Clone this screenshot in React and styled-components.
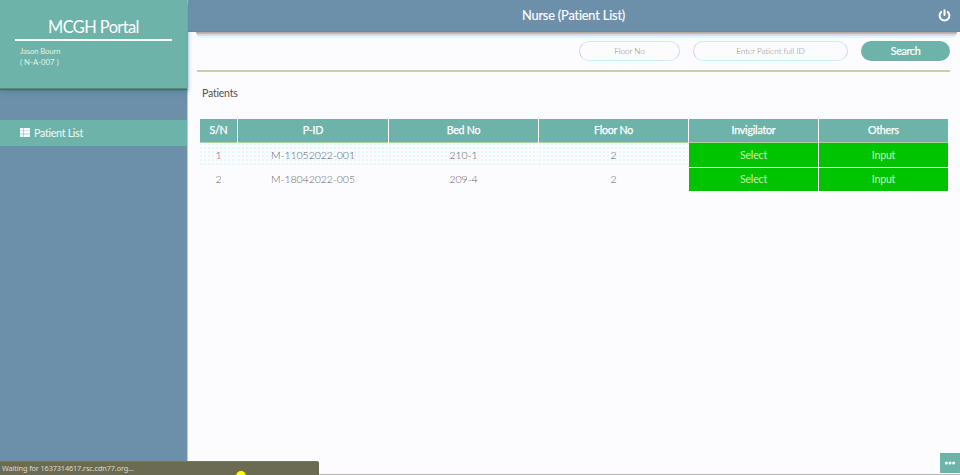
import React from 'react';
import styled, { createGlobalStyle } from 'styled-components';

const Global = createGlobalStyle`
  * { box-sizing: border-box; }
  html, body { margin: 0; overflow: hidden; }
  body {
    font-family: Lato, "Open Sans", sans-serif;
    font-variant-ligatures: none;
    background: #fcfcff;
  }
`;

const Page = styled.div`
  position: relative;
  display: flex;
  width: 960px;
  height: 475px;
  overflow: hidden;
  background: #fcfcff;
`;

const Sidebar = styled.aside`
  width: 188px;
  flex: none;
  background: #6c8faa;
  border-right: 1px solid #b9cdb9;
`;

const Brand = styled.div`
  height: 89px;
  padding: 16px 15px 0;
  background: #6db3aa;
  border-bottom: 1px solid #5d8a7c;
  box-shadow: 0 1px 1px #456b60, 0 3px 5px #4d86a0;
  color: #fff;
`;

const BrandTitle = styled.h1`
  margin: 0;
  height: 25px;
  font-size: 16.4px;
  font-weight: 400;
  line-height: 22px;
  letter-spacing: -0.58px;
  text-align: center;
  white-space: nowrap;
  border-bottom: 2px solid #fbfff4;
`;

const User = styled.div`
  padding: 5px 5px 0;
  font-size: 7.7px;
  line-height: 11px;
  color: #e2f3dd;
`;

const UserLine = styled.div`
  letter-spacing: ${(p) => p.$spacing};
`;

const NavItem = styled.a`
  display: flex;
  align-items: center;
  gap: 4px;
  height: 26px;
  margin-top: 31px;
  padding: 0 0 2px 20px;
  background: #6db3aa;
  color: #f2fbf4;
  font-size: 10.8px;
  letter-spacing: -0.34px;
`;

const Main = styled.main`
  width: 772px;
`;

const TopBar = styled.header`
  position: relative;
  display: flex;
  align-items: center;
  justify-content: center;
  height: 32px;
  background: #6c8faa;
  border-bottom: 1px solid #608ca8;
  color: #fff;
  font-size: 12.8px;
  letter-spacing: -0.18px;
  -webkit-text-stroke: 0.15px #fff;
  padding: 0 1px 1px 0;
`;

const PowerButton = styled.span`
  position: absolute;
  right: 9px;
  top: 9px;
  display: flex;
`;

const BarShadow = styled.div`
  height: 6px;
  margin: 0 3px 0 8px;
  border-radius: 0 0 8px 8px;
  background: linear-gradient(#b2aba8 0 1px, #c2b8b0 1px 2px, #dcd5f4 2px 4px, #dcfaff 4px 6px);
`;

const SearchBar = styled.form`
  display: flex;
  justify-content: flex-end;
  height: 34px;
  margin: 0 10px 0 9px;
  padding-top: 3px;
  gap: 13px;
  border-bottom: 2px solid #c5d3a3;
`;

const Field = styled.input`
  width: ${(p) => p.$width};
  height: 20px;
  padding: 0;
  border: 1px solid #ccecff;
  border-left-color: #d5d0f6;
  border-right-color: #d5d0f6;
  border-radius: 10px;
  background: #fcfcff;
  font-family: inherit;
  font-size: 8.2px;
  letter-spacing: -0.05px;
  font-weight: 300;
  text-align: center;
  outline: none;
  &::placeholder { color: #85838a; opacity: 1; }
`;

const SearchButton = styled.button`
  width: 89px;
  height: 20px;
  padding: 0 0 2px;
  border: 0;
  border-radius: 10px;
  background: #6db3aa;
  color: #fff;
  font-family: inherit;
  font-size: 10.8px;
  letter-spacing: -0.35px;
  -webkit-text-stroke: 0.2px #fff;
`;

const SectionTitle = styled.h2`
  margin: 14px 0 0 14px;
  height: 33px;
  font-size: 10.5px;
  font-weight: 400;
  line-height: 15px;
  letter-spacing: -0.2px;
  color: #505050;
`;

const Table = styled.div`
  width: 748px;
  margin-left: 12px;
`;

const Row = styled.div`
  display: grid;
  grid-template-columns: 37px 150px 149px 149px 129px 129px;
  column-gap: 1px;
  height: 24px;
  & + & { margin-bottom: 1px; }
  &:last-child { height: 23px; }
`;

const HeadCell = styled.div`
  display: flex;
  align-items: center;
  justify-content: center;
  padding-bottom: 1px;
  background: #6db3aa;
  border-bottom: 1px solid #b4cda4;
  color: #fff;
  font-size: 10.6px;
  letter-spacing: -0.2px;
  -webkit-text-stroke: 0.25px #fff;
`;

const Cell = styled.div`
  display: flex;
  align-items: center;
  justify-content: center;
  padding-bottom: 1px;
  color: ${(p) => (p.$alt ? '#5c5a68' : '#68665a')};
  font-size: 10.6px;
  font-weight: 300;
  letter-spacing: -0.08px;
  background: ${(p) =>
    p.$alt ? 'radial-gradient(circle at 1px 1px, #dff9ff 0.7px, #fcfcff 1px) 0 0 / 4px 4px' : '#fcfcff'};
`;

const ActionCell = styled.div`
  display: flex;
  align-items: center;
  justify-content: center;
  padding-bottom: 1px;
  background: #00c400;
  color: #c9f5b4;
  font-size: 10.5px;
  letter-spacing: -0.15px;
`;

const StatusBubble = styled.div`
  position: absolute;
  left: 0;
  bottom: 0;
  width: 319px;
  height: 14px;
  padding-left: 2px;
  overflow: hidden;
  border-top: 1px solid #77775f;
  border-radius: 0 2px 0 0;
  background: #6b6b53;
  color: #dddccb;
  font-family: "Noto Sans", "Open Sans", sans-serif;
  font-size: 7.3px;
  letter-spacing: -0.11px;
  line-height: 13px;
  white-space: nowrap;
`;

const Pointer = styled.div`
  position: absolute;
  left: 236px;
  top: 9px;
  width: 10px;
  height: 10px;
  border-radius: 50%;
  background: #ffff00;
`;

const BottomEdge = styled.div`
  position: absolute;
  left: 319px;
  right: 0;
  bottom: 0;
  height: 1px;
  background: #b8b8ac;
`;

const MoreButton = styled.button`
  position: absolute;
  right: 0;
  bottom: 2px;
  display: flex;
  align-items: center;
  justify-content: center;
  width: 20px;
  height: 20px;
  padding: 0;
  border: 0;
  background: #6db3aa;
`;

const ListIcon = () => (
  <svg width="10" height="9" viewBox="0 0 10 9" fill="#f5faff">
    <path d="M0 0h3v2.7H0zM3.5 0H10v2.7H3.5zM0 3.1h3v2.7H0zM3.5 3.1H10v2.7H3.5zM0 6.2h3V9H0zM3.5 6.2H10V9H3.5z" />
  </svg>
);

const PowerIcon = () => (
  <svg width="13" height="13" viewBox="0 0 13 13" fill="none" stroke="#fff" strokeWidth="2" strokeLinecap="round">
    <path d="M3.2 2.9a4.9 4.9 0 1 0 6.6 0M6.5 1.2v4.8" />
  </svg>
);

const DotsIcon = () => (
  <svg width="12" height="4" viewBox="0 0 12 4" fill="#fff">
    <circle cx="2.4" cy="2" r="1.5" />
    <circle cx="6" cy="2" r="1.5" />
    <circle cx="9.6" cy="2" r="1.5" />
  </svg>
);

const headings = ['S/N', 'P-ID', 'Bed No', 'Floor No', 'Invigilator', 'Others'];
const patients = [
  ['1', 'M-11052022-001', '210-1', '2'],
  ['2', 'M-18042022-005', '209-4', '2'],
];

export default function App() {
  return (
    <Page>
      <Global />
      <Sidebar>
        <Brand>
          <BrandTitle>MCGH Portal</BrandTitle>
          <User>
            <UserLine $spacing="-0.1px">Jason Bourn</UserLine>
            <UserLine $spacing="0.05px">( N-A-007 )</UserLine>
          </User>
        </Brand>
        <NavItem><ListIcon />Patient List</NavItem>
      </Sidebar>
      <Main>
        <TopBar>
          Nurse (Patient List)
          <PowerButton><PowerIcon /></PowerButton>
        </TopBar>
        <BarShadow />
        <SearchBar>
          <Field $width="101px" placeholder="Floor No" />
          <Field $width="155px" placeholder="Enter Patient full ID" />
          <SearchButton type="button">Search</SearchButton>
        </SearchBar>
        <SectionTitle>Patients</SectionTitle>
        <Table>
          <Row>
            {headings.map((h) => <HeadCell key={h}>{h}</HeadCell>)}
          </Row>
          {patients.map((values, i) => (
            <Row key={values[0]}>
              {values.map((v, j) => <Cell key={j} $alt={i === 0}>{v}</Cell>)}
              <ActionCell>Select</ActionCell>
              <ActionCell>Input</ActionCell>
            </Row>
          ))}
        </Table>
      </Main>
      <BottomEdge />
      <StatusBubble>
        Waiting for 1637314617.rsc.cdn77.org...
        <Pointer />
      </StatusBubble>
      <MoreButton><DotsIcon /></MoreButton>
    </Page>
  );
}
